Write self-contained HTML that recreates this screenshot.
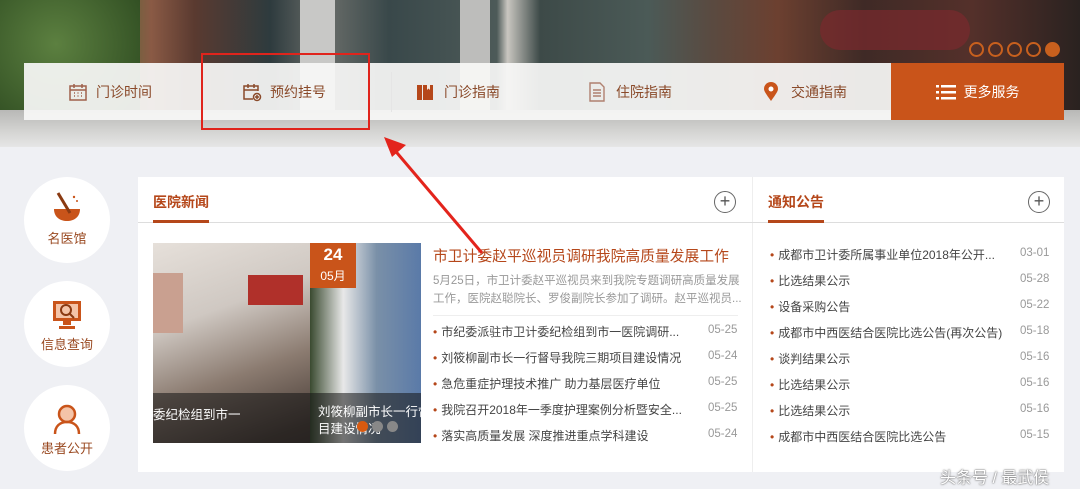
<!DOCTYPE html>
<html><head><meta charset="utf-8"><style>
*{margin:0;padding:0;box-sizing:border-box}
body{width:1080px;height:489px;overflow:hidden;background:#eff0f4;font-family:"Liberation Sans","Noto Sans CJK SC",sans-serif;position:relative}
.abs{position:absolute}
.hero{left:0;top:0;width:1080px;height:147px;background:linear-gradient(90deg,#3d5a2a 0,#4f6d35 10%,#8a5a45 14%,#5a3a30 18%,#2e3b3e 25%,#6b6e6a 30%,#39484a 36%,#4d5a58 46%,#c9c6c0 47%,#3d4a48 50%,#4b5a57 60%,#5a4a40 66%,#6c4030 72%,#3f2a26 80%,#54302a 90%,#2a2220 100%)}
.pave{left:0;top:110px;width:1080px;height:37px;background:linear-gradient(180deg,#b8b8b6,#d5d5d3 60%,#e6e6e6)}
.bar{left:24px;top:63px;width:1040px;height:57px;background:rgba(248,247,246,.93)}
.item{top:63px;height:57px;display:flex;align-items:center;font-size:14px;color:#8a4a2a}
.more{left:891px;top:63px;width:173px;height:57px;background:#c9541a;color:#fff;display:flex;align-items:center;justify-content:center;font-size:14px}
.dots{left:969px;top:42px;display:flex;gap:4px}
.dots span{width:15px;height:15px;border:2px solid #c8601e;border-radius:50%}
.circ{left:24px;width:86px;height:86px;border-radius:50%;background:#fff;text-align:center;font-size:13px;color:#9a4a22}
.card{left:138px;top:177px;width:926px;height:295px;background:#fff}
.h{font-size:14px;color:#b5471a;font-weight:bold}
.plus{width:22px;height:22px;border:1px solid #666;border-radius:50%;text-align:center;line-height:19px;font-size:18px;color:#555}
.li{font-size:12px;color:#444;white-space:nowrap}
.li:before{content:"•";color:#b5471a;margin-right:4px}
.d{font-size:11.5px;color:#999}
</style></head><body>
<div class="abs hero"></div>
<div class="abs" style="left:300px;top:0;width:35px;height:110px;background:#c8c8c6"></div>
<div class="abs" style="left:460px;top:0;width:30px;height:110px;background:#bdbdbb"></div>
<div class="abs" style="left:0;top:0;width:140px;height:110px;background:radial-gradient(circle at 40% 40%,#5c8040,#2d4a20)"></div>
<div class="abs" style="left:820px;top:10px;width:150px;height:40px;background:#7a2a2e;border-radius:20px;opacity:.7"></div>
<div class="abs pave"></div>
<div class="abs dots"><span></span><span></span><span></span><span></span><span style="background:#c8601e"></span></div>
<div class="abs bar"></div>
<div class="abs" style="left:391px;top:72px;width:1px;height:40px;background:#e5e5e5"></div>
<div class="abs item" style="left:68px">
<svg width="20" height="20" viewBox="0 0 20 20" fill="none" stroke="#a0604a" stroke-width="1.5"><rect x="2" y="4" width="16" height="14"/><path d="M2 8h16M6 2v4M14 2v4"/><path d="M6 11h1M9.5 11h1M13 11h1M6 14h1M9.5 14h1M13 14h1"/></svg><span style="margin-left:8px">门诊时间</span></div>
<div class="abs item" style="left:242px">
<svg width="20" height="20" viewBox="0 0 20 20" fill="none" stroke="#8a4a2a" stroke-width="1.5"><path d="M11 17H2V4h14v5M2 8h14M6 2v4M12 2v4"/><circle cx="15" cy="15" r="3.5"/><path d="M15 13v4M13 15h4"/></svg><span style="margin-left:8px">预约挂号</span></div>
<div class="abs item" style="left:416px">
<svg width="18" height="18" viewBox="0 0 18 18"><path d="M1 2h5v15H1zM7 2h10v15H7z" fill="#b5471a"/><path d="M11 2h3v5l-1.5-1.5L11 7z" fill="#f5e9e0"/></svg><span style="margin-left:10px">门诊指南</span></div>
<div class="abs item" style="left:588px">
<svg width="18" height="20" viewBox="0 0 18 20" fill="none" stroke="#b08070" stroke-width="1.4"><path d="M2 1h10l4 4v14H2z"/><path d="M5 8h8M5 11h8M5 14h8"/></svg><span style="margin-left:10px">住院指南</span></div>
<div class="abs item" style="left:763px">
<svg width="16" height="20" viewBox="0 0 16 20"><path d="M8 19C3 12 1 9 1 7a7 7 0 0 1 14 0c0 2-2 5-7 12z" fill="#c9541a"/><circle cx="8" cy="7" r="2.5" fill="#fff"/></svg><span style="margin-left:12px">交通指南</span></div>
<div class="abs more"><svg width="20" height="16" viewBox="0 0 20 16" fill="#fff"><rect x="0" y="1" width="3" height="2.5"/><rect x="5" y="1" width="15" height="2.5"/><rect x="0" y="7" width="3" height="2.5"/><rect x="5" y="7" width="15" height="2.5"/><rect x="0" y="13" width="3" height="2.5"/><rect x="5" y="13" width="15" height="2.5"/></svg><span style="margin-left:8px">更多服务</span></div>
<div class="abs" style="left:201px;top:53px;width:169px;height:77px;border:2px solid #e0241c"></div>

<div class="abs circ" style="top:177px"><svg style="margin-top:14px" width="34" height="34" viewBox="0 0 34 34"><path d="M4 18h26c0 8-6 12-13 12S4 26 4 18z" fill="#c9541a"/><path d="M8 2l12 20" stroke="#8a3a12" stroke-width="3"/><circle cx="24" cy="6" r="1.2" fill="#c9541a"/><circle cx="27" cy="10" r="1" fill="#c9541a"/></svg><div>名医馆</div></div>
<div class="abs circ" style="top:281px"><svg style="margin-top:18px" width="34" height="32" viewBox="0 0 34 32"><rect x="3" y="2" width="28" height="20" fill="#c9541a"/><rect x="6" y="5" width="22" height="14" fill="#f4c4a8"/><circle cx="16" cy="11" r="5" fill="none" stroke="#8a3a12" stroke-width="2"/><path d="M19 14l5 5" stroke="#8a3a12" stroke-width="2"/><path d="M13 22h8v4h-8zM9 27h16v3H9z" fill="#c9541a"/></svg><div>信息查询</div></div>
<div class="abs circ" style="top:385px"><svg style="margin-top:18px" width="30" height="32" viewBox="0 0 30 32"><circle cx="15" cy="11" r="8" fill="#f4c4a8" stroke="#c9541a" stroke-width="2.5"/><path d="M3 31c0-8 5-12 12-12s12 4 12 12" fill="none" stroke="#c9541a" stroke-width="2.5"/></svg><div>患者公开</div></div>

<div class="abs card"></div>
<div class="abs" style="left:752px;top:177px;width:1px;height:295px;background:#eee"></div>
<div class="abs" style="left:138px;top:222px;width:926px;height:1px;background:#ddd"></div>
<div class="abs h" style="left:153px;top:192px">医院新闻</div>
<div class="abs" style="left:153px;top:220px;width:56px;height:3px;background:#b5471a"></div>
<div class="abs h" style="left:768px;top:192px">通知公告</div>
<div class="abs" style="left:768px;top:220px;width:56px;height:3px;background:#b5471a"></div>
<div class="abs plus" style="left:714px;top:191px">+</div>
<div class="abs plus" style="left:1028px;top:191px">+</div>

<div class="abs" style="left:153px;top:243px;width:268px;height:200px;background:linear-gradient(160deg,#e6e0da 0,#cfc8c2 30%,#8b7b70 55%,#4a3e38 80%,#2e2623);overflow:hidden">
<div class="abs" style="left:0;top:30px;width:30px;height:60px;background:#c9a090"></div>
<div class="abs" style="left:95px;top:32px;width:55px;height:30px;background:#b0302a"></div>
<div class="abs" style="left:157px;top:0;width:111px;height:200px;background:linear-gradient(90deg,#3a4a30,#e8e8e8 30%,#7a90a8 60%,#5a7aa8)"></div>
<div class="abs" style="left:0;top:150px;width:268px;height:50px;background:rgba(20,20,20,.55)"></div>
<div class="abs" style="left:0;top:161px;color:#fff;font-size:12.5px;white-space:nowrap">委纪检组到市一</div>
<div class="abs" style="left:165px;top:161px;color:#fff;font-size:12.5px;line-height:17px;white-space:nowrap">刘筱柳副市长一行督<br>目建设情况</div>
<div class="abs" style="left:204px;top:178px;width:11px;height:11px;border-radius:50%;background:#d85a10"></div>
<div class="abs" style="left:219px;top:178px;width:11px;height:11px;border-radius:50%;background:#888"></div>
<div class="abs" style="left:234px;top:178px;width:11px;height:11px;border-radius:50%;background:#888"></div>
</div>
<div class="abs" style="left:310px;top:243px;width:46px;height:45px;background:#c9541a;color:#fff;text-align:center"><div style="font-size:17px;font-weight:bold;line-height:24px">24</div><div style="font-size:12px">05月</div></div>

<div class="abs" style="left:433px;top:245px;font-size:14.8px;color:#b5471a;white-space:nowrap">市卫计委赵平巡视员调研我院高质量发展工作</div>
<div class="abs" style="left:433px;top:272px;font-size:11.5px;color:#999;line-height:18px;width:310px">5月25日，市卫计委赵平巡视员来到我院专题调研高质量发展工作，医院赵聪院长、罗俊副院长参加了调研。赵平巡视员...</div>
<div class="abs" style="left:433px;top:315px;width:305px;height:1px;background:#eee"></div>
<div class="abs li" style="left:433px;top:323px">市纪委派驻市卫计委纪检组到市一医院调研...</div><div class="abs d" style="left:708px;top:324px">05-25</div>
<div class="abs li" style="left:433px;top:349px">刘筱柳副市长一行督导我院三期项目建设情况</div><div class="abs d" style="left:708px;top:350px">05-24</div>
<div class="abs li" style="left:433px;top:375px">急危重症护理技术推广 助力基层医疗单位</div><div class="abs d" style="left:708px;top:376px">05-25</div>
<div class="abs li" style="left:433px;top:401px">我院召开2018年一季度护理案例分析暨安全...</div><div class="abs d" style="left:708px;top:402px">05-25</div>
<div class="abs li" style="left:433px;top:427px">落实高质量发展 深度推进重点学科建设</div><div class="abs d" style="left:708px;top:428px">05-24</div>

<div class="abs li" style="left:770px;top:246px">成都市卫计委所属事业单位2018年公开...</div><div class="abs d" style="left:1020px;top:247px">03-01</div>
<div class="abs li" style="left:770px;top:272px">比选结果公示</div><div class="abs d" style="left:1020px;top:273px">05-28</div>
<div class="abs li" style="left:770px;top:298px">设备采购公告</div><div class="abs d" style="left:1020px;top:299px">05-22</div>
<div class="abs li" style="left:770px;top:324px">成都市中西医结合医院比选公告(再次公告)</div><div class="abs d" style="left:1020px;top:325px">05-18</div>
<div class="abs li" style="left:770px;top:350px">谈判结果公示</div><div class="abs d" style="left:1020px;top:351px">05-16</div>
<div class="abs li" style="left:770px;top:376px">比选结果公示</div><div class="abs d" style="left:1020px;top:377px">05-16</div>
<div class="abs li" style="left:770px;top:402px">比选结果公示</div><div class="abs d" style="left:1020px;top:403px">05-16</div>
<div class="abs li" style="left:770px;top:428px">成都市中西医结合医院比选公告</div><div class="abs d" style="left:1020px;top:429px">05-15</div>
<svg class="abs" style="left:370px;top:125px" width="130" height="140"><path d="M112 128L22 22" stroke="#e3241c" stroke-width="3"/><path d="M14 12l22 8-14 12z" fill="#e3241c"/></svg>
<div class="abs" style="left:940px;top:464px;font-size:16px;color:#fff;text-shadow:0 0 2px #777,0 0 1px #555">头条号 / 最武侯</div>
</body></html>
